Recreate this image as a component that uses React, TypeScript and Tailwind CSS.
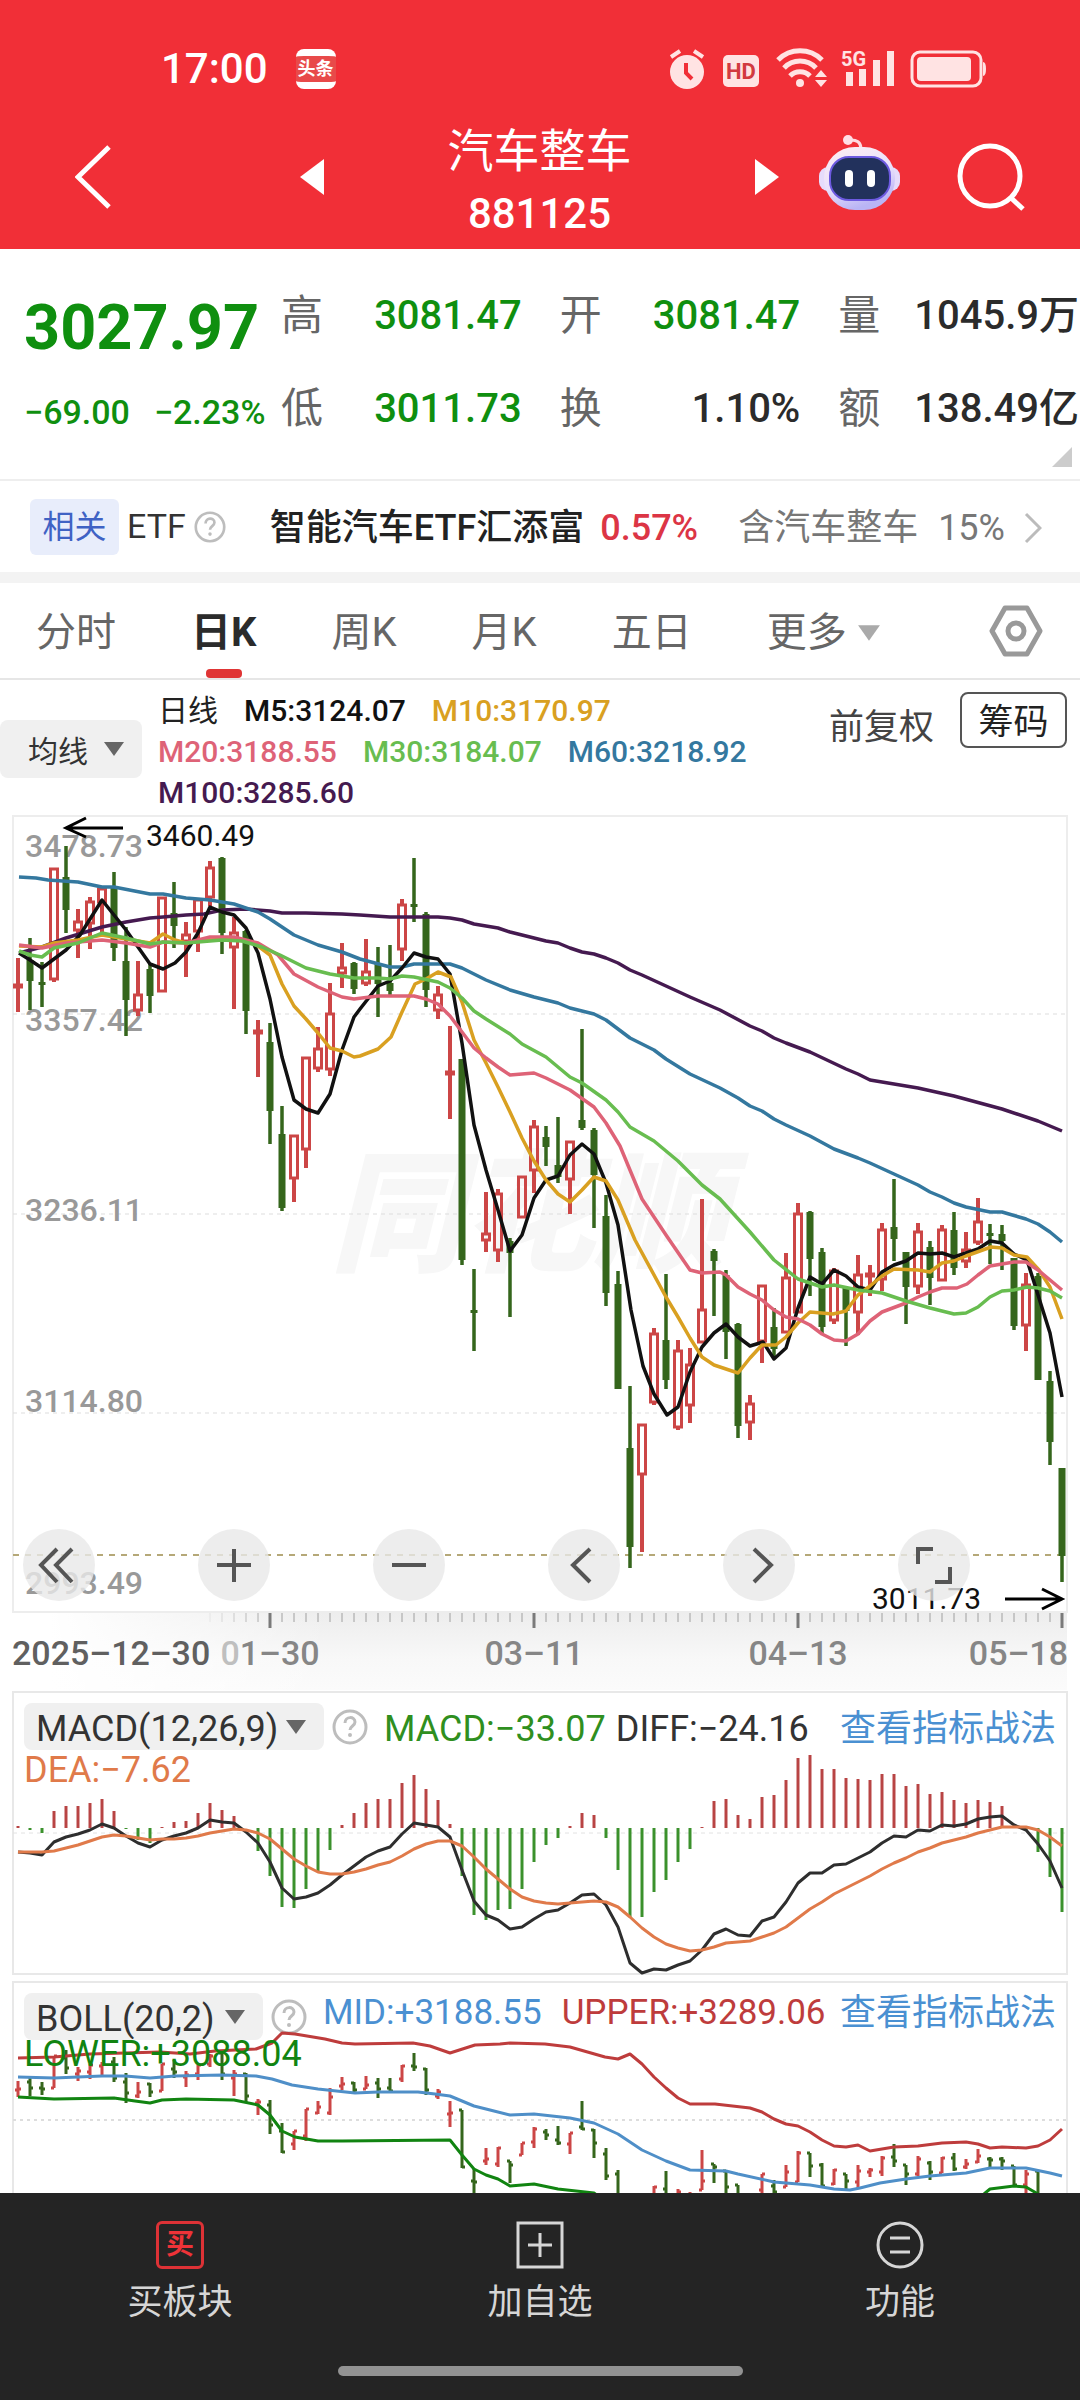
import React from 'react';

type Candle = [string, number, number, number, number];

// [direction, high, body top, body bottom, low]
const candles: Candle[] = [
    ['r', 158, 184, 188, 212], ['g', 138, 160, 181, 210], ['g', 162, 182, 185, 207], ['r', 68, 68, 180, 182],
    ['g', 46, 77, 110, 133], ['r', 109, 121, 131, 158], ['r', 97, 101, 124, 149], ['r', 88, 88, 103, 135],
    ['g', 72, 88, 148, 161], ['g', 127, 161, 200, 236], ['r', 161, 194, 211, 216], ['g', 163, 169, 196, 213],
    ['r', 97, 97, 192, 192], ['g', 82, 113, 126, 148], ['r', 122, 134, 142, 177], ['r', 99, 99, 132, 152],
    ['r', 61, 67, 98, 106], ['g', 57, 58, 133, 154], ['r', 117, 132, 148, 209], ['g', 130, 131, 211, 234],
    ['r', 220, 230, 234, 277], ['g', 223, 242, 311, 344], ['g', 306, 334, 408, 411], ['r', 335, 335, 379, 402],
    ['r', 257, 257, 350, 368], ['r', 227, 248, 269, 272], ['r', 183, 213, 270, 276], ['r', 143, 167, 174, 188],
    ['g', 162, 163, 189, 194], ['r', 139, 171, 184, 186], ['g', 147, 163, 184, 217], ['g', 145, 183, 191, 195],
    ['r', 99, 104, 150, 161], ['g', 58, 104, 107, 122], ['g', 112, 114, 190, 207], ['r', 186, 194, 211, 219],
    ['r', 226, 271, 275, 319], ['g', 259, 259, 460, 465], ['g', 469, 510, 513, 551], ['r', 392, 433, 441, 452],
    ['r', 389, 393, 451, 462], ['g', 438, 441, 453, 517], ['r', 376, 376, 418, 418], ['r', 320, 326, 371, 393],
    ['g', 326, 337, 347, 366], ['g', 317, 365, 377, 383], ['r', 341, 341, 380, 414], ['g', 229, 320, 328, 330],
    ['g', 328, 330, 375, 428], ['g', 395, 416, 493, 506], ['g', 471, 484, 589, 589], ['g', 586, 648, 747, 768],
    ['r', 624, 624, 675, 752], ['r', 528, 533, 603, 605], ['g', 474, 540, 580, 589], ['r', 540, 550, 628, 630],
    ['r', 548, 564, 606, 623], ['r', 399, 509, 543, 543], ['g', 449, 451, 461, 516], ['g', 470, 475, 532, 559],
    ['g', 523, 524, 626, 638], ['r', 595, 603, 623, 640], ['r', 485, 485, 542, 563], ['g', 508, 527, 549, 559],
    ['r', 453, 477, 533, 533], ['r', 403, 413, 513, 513], ['g', 411, 412, 459, 496], ['g', 448, 452, 527, 533],
    ['r', 468, 470, 521, 524], ['g', 487, 487, 511, 546], ['r', 455, 474, 513, 535], ['r', 465, 473, 477, 496],
    ['r', 423, 429, 480, 491], ['g', 379, 427, 439, 461], ['g', 452, 452, 487, 524], ['r', 423, 431, 487, 494],
    ['g', 441, 447, 478, 505], ['r', 425, 429, 481, 481], ['g', 412, 430, 468, 475], ['r', 432, 449, 462, 468],
    ['r', 398, 421, 443, 445], ['g', 424, 433, 436, 464], ['g', 425, 434, 441, 470], ['g', 458, 458, 526, 530],
    ['r', 473, 484, 526, 551], ['g', 473, 476, 580, 580], ['g', 571, 581, 642, 665], ['g', 668, 668, 756, 782],
];

const averages = [
    { name: 'M100', color: '#451a50', points: '19,153 42,147 66,138 102,127 126,122 150,118 163,117 186,115 204,114 222,110 246,109 270,111 282,113 306,113 342,114 360,115 390,117 438,117 450,118 462,120 474,124 498,128 510,132 546,141 558,143 570,148 582,152 594,154 606,158 618,163 630,170 642,175 690,197 720,210 750,226 762,231 774,238 786,243 810,252 846,269 858,274 870,280 894,284 918,288 954,296 1002,309 1038,321 1062,331' },
    { name: 'M60', color: '#34789f', points: '19,77 36,78 48,80 78,82 102,87 114,87 150,94 163,94 186,98 210,100 234,104 258,112 270,119 294,135 318,145 342,152 360,159 390,167 402,167 414,164 450,164 462,168 486,180 510,190 534,197 558,203 570,208 594,214 606,220 618,229 630,238 654,250 666,259 690,274 720,288 738,298 750,306 762,311 774,319 786,325 810,336 834,349 858,358 870,363 894,374 918,385 930,392 942,397 954,403 966,407 990,412 1002,412 1026,419 1038,424 1050,432 1062,442' },
    { name: 'M5', color: '#111111', points: '19,153 30,160 42,168 66,150 80,135 102,100 126,130 150,164 163,169 175,163 186,152 198,133 210,107 222,112 234,115 246,128 258,153 270,199 282,257 294,300 306,309 318,313 330,294 342,250 354,217 360,209 378,186 390,181 402,168 414,153 426,157 438,159 450,174 462,243 474,325 486,370 498,410 510,451 522,435 534,398 546,380 558,376 570,355 582,344 594,354 606,383 618,425 631,510 643,566 654,594 667,615 678,607 690,572 702,547 714,533 726,524 738,537 750,546 763,542 774,559 786,548 798,508 810,477 822,484 834,470 846,476 858,487 870,490 882,472 894,465 906,461 918,453 930,454 942,453 954,457 966,453 978,449 990,441 1002,443 1014,454 1027,460 1050,533 1062,597' },
    { name: 'M10', color: '#d9a021', points: '19,146 42,147 54,143 78,140 102,135 126,139 150,143 163,134 175,140 186,143 210,140 234,139 254,143 270,155 282,184 294,206 306,219 318,233 330,248 342,251 354,257 360,256 378,249 391,237 402,212 415,184 426,179 438,172 451,177 462,202 474,240 486,263 498,287 510,312 522,338 534,361 546,380 558,394 570,402 582,390 594,377 606,381 618,400 635,440 666,497 678,517 690,538 702,557 714,565 738,573 750,558 762,545 776,545 786,537 798,523 810,512 833,514 846,511 858,495 870,486 882,476 894,469 918,470 930,472 942,463 954,461 966,456 991,447 1002,448 1014,455 1027,457 1039,470 1050,487 1062,519' },
    { name: 'M20', color: '#de6377', points: '19,145 42,148 66,143 102,140 126,143 150,147 163,142 186,143 210,137 234,137 258,143 278,155 294,174 318,187 342,197 354,199 378,196 414,196 426,199 438,204 450,216 462,232 474,248 486,258 498,267 510,275 534,273 546,278 570,290 594,307 606,323 620,346 642,399 666,435 690,470 702,473 720,472 726,475 738,487 750,494 762,500 774,510 786,517 798,519 810,525 822,534 834,540 846,541 858,534 870,521 882,512 906,503 918,497 930,492 942,488 957,488 967,484 978,475 990,466 1014,462 1026,462 1038,470 1062,490' },
    { name: 'M30', color: '#68bd50', points: '19,151 30,155 42,157 54,148 78,143 102,133 126,138 150,144 163,142 186,143 222,140 242,141 262,147 280,155 306,168 330,174 354,178 378,178 390,179 402,176 414,177 438,182 450,188 462,198 474,211 486,219 510,234 522,244 546,257 570,277 582,283 606,300 618,312 630,327 654,341 678,361 702,385 720,399 750,432 774,460 798,479 810,483 822,487 834,485 858,490 882,493 906,501 930,508 954,514 966,513 978,507 990,497 1002,491 1014,490 1027,487 1038,488 1050,491 1062,498' },
];

const macdBars = [
    146, 150, 153, 131, 126, 126, 123, 119, 131, 149, 160, 163, 147, 142, 141, 133, 123, 130, 136, 148, 171, 196,
    227, 228, 209, 192, 170, 145, 133, 123, 119, 119, 103, 95, 109, 120, 144, 196, 235, 240, 230, 229, 209, 182,
    165, 158, 146, 133, 135, 158, 190, 237, 237, 212, 200, 182, 169, 147, 121, 119, 135, 139, 117, 115, 100, 78,
    75, 89, 89, 98, 99, 100, 94, 94, 106, 104, 114, 112, 120, 123, 120, 122, 126, 148, 151, 172, 197, 232,
];
const diff = [
    172, 173, 175, 162, 157, 154, 150, 144, 148, 156, 163, 167, 160, 156, 153, 148, 140, 142, 143, 152, 163, 182,
    208, 219, 217, 213, 205, 195, 186, 177, 171, 167, 154, 143, 145, 147, 157, 190, 221, 235, 240, 249, 247, 239,
    232, 230, 223, 215, 214, 225, 247, 283, 293, 289, 290, 285, 281, 270, 254, 249, 255, 256, 241, 237, 222, 203,
    193, 193, 185, 184, 178, 172, 163, 156, 157, 150, 151, 145, 146, 144, 139, 137, 136, 145, 150, 164, 181, 208,
];
const dea = [
    172, 172, 172, 171, 168, 165, 161, 157, 155, 156, 158, 160, 159, 159, 158, 156, 153, 151, 149, 150, 153, 159,
    169, 179, 186, 192, 194, 194, 192, 189, 185, 182, 176, 169, 164, 161, 161, 166, 177, 189, 199, 209, 217, 221,
    223, 224, 223, 222, 221, 222, 227, 237, 248, 257, 264, 268, 271, 270, 267, 263, 262, 261, 257, 253, 247, 238,
    229, 222, 214, 208, 202, 196, 189, 183, 178, 172, 168, 163, 160, 157, 153, 150, 147, 147, 147, 150, 157, 166,
];

const boll = [
    { color: '#be3c3c', points: '18,78 54,77 90,74 125,73 160,72 190,74 215,71 256,69 272,63 282,53 295,54 325,59 342,63 355,64 413,63 430,66 450,73 475,65 500,64 510,63 545,64 570,67 605,77 618,79 630,74 642,84 654,97 666,108 678,118 690,124 715,124 750,128 762,132 774,139 786,144 798,146 810,152 822,160 834,166 846,167 858,165 870,171 894,167 918,166 942,163 966,162 978,164 990,168 1002,167 1026,168 1038,166 1050,160 1062,149' },
    { color: '#4f8fc8', points: '18,97 54,98 102,96 125,96 150,98 175,96 222,95 256,96 272,99 292,105 318,109 355,113 378,112 418,112 435,114 450,116 474,126 490,130 510,135 534,134 570,138 594,143 618,154 642,170 666,181 690,190 726,191 738,194 774,202 810,205 834,209 850,210 860,208 880,203 906,199 930,196 966,193 990,188 1026,188 1050,193 1062,196' },
    { color: '#118411', points: '18,117 54,119 114,118 135,121 150,123 162,120 186,119 234,120 258,125 270,135 282,151 295,157 318,161 342,161 450,160 462,175 474,189 486,195 498,199 510,206 534,204 558,209 594,213 606,222 700,260 900,260 972,222 984,214 990,209 1014,206 1026,207 1038,214 1062,240' },
];

const barX = (i: number) => 18 + i * 12;
const toPoints = (values: number[]) => values.map((v, i) => `${barX(i)},${v}`).join(' ');
const toBollY = (y: number) => Math.round(y * 0.283 + 56.6);

const StatusIcons: React.FC = () => (
    <svg viewBox="0 0 320 42" className="w-[320px] h-[42px]" fill="#ffe3e3">
        {/* alarm */}
        <circle cx="18" cy="24" r="17" />
        <path d="M2 9 11 3M34 9 25 3" stroke="#ffe3e3" strokeWidth="4" />
        <path d="M17 15v10l6 6" stroke="#f12f37" strokeWidth="4" fill="none" />
        {/* HD */}
        <rect x="54" y="7" width="36" height="32" rx="5" />
        <text x="72" y="31" textAnchor="middle" fontSize="22" fontWeight="700" fill="#d23a40">HD</text>
        {/* wifi */}
        <g fill="none" stroke="#ffe3e3" strokeWidth="5">
            <path d="M109 12a31 31 0 0 1 44 0M115 20a22 22 0 0 1 32 0M121 28a14 14 0 0 1 20 0" />
        </g>
        <circle cx="131" cy="35" r="4" />
        <path d="m152 22 6 7h-12zM152 39l6-7h-12z" />
        {/* signal */}
        <text x="172" y="18" fontSize="20" fontWeight="700">5G</text>
        <path d="M177 24h7v14h-7zM190 21h7v17h-7zM204 12h7v26h-7zM218 3h7v35h-7z" />
        {/* battery */}
        <rect x="243" y="4" width="69" height="34" rx="8" fill="none" stroke="#ffe3e3" strokeWidth="3" />
        <rect x="248" y="9" width="54" height="24" rx="4" />
        <path d="M314 14q3 0 3 7t-3 7z" />
    </svg>
);

const RobotIcon: React.FC = () => (
    <svg viewBox="0 0 81 76" className="w-[81px] h-[76px]">
        <defs>
            <linearGradient id="shell" x1="0" y1="0" x2="0.4" y2="1">
                <stop offset="0" stopColor="#ffeef2" />
                <stop offset="0.6" stopColor="#e9e0fb" />
                <stop offset="1" stopColor="#b9b4f5" />
            </linearGradient>
        </defs>
        <path d="M30 5q12-1 12 9" fill="none" stroke="#ffd9e0" strokeWidth="3" />
        <circle cx="29" cy="5" r="5" fill="#ffdfe6" />
        <rect x="0" y="32" width="81" height="24" rx="9" fill="#e6dcfb" />
        <rect x="5" y="12" width="71" height="63" rx="31" fill="url(#shell)" />
        <rect x="11" y="22" width="60" height="43" rx="19" fill="#22315c" stroke="#6d5ae0" strokeWidth="2" />
        <rect x="26" y="35" width="8" height="17" rx="4" fill="#fff" />
        <rect x="48" y="35" width="8" height="17" rx="4" fill="#fff" />
    </svg>
);

const HelpIcon: React.FC<{ className: string }> = ({ className }) => (
    <svg viewBox="0 0 36 36" className={className} fill="none">
        <circle cx="18" cy="18" r="16" stroke="#bdbdbd" strokeWidth="3" />
        <path d="M13 14c0-7 10-7 10-1 0 4-5 4-5 8" stroke="#bdbdbd" strokeWidth="3" />
        <circle cx="18" cy="26" r="2" fill="#bdbdbd" />
    </svg>
);

const Caret: React.FC<{ className: string }> = ({ className }) => (
    <svg viewBox="0 0 22 16" className={className}>
        <path d="M1 1h20L11 15z" fill="currentColor" />
    </svg>
);

interface PickerProps {
    label: string;
    value: string;
    className: string;
}

const Picker: React.FC<PickerProps> = ({ label, value, className }) => (
    <div className="relative shrink-0">
        <select aria-label={label} defaultValue={value} className={`appearance-none bg-[#f0f0f0] text-[#333] rounded-lg pt-1 ${className}`}>
            <option>{value}</option>
        </select>
        <Caret className="absolute right-4 top-1/2 -translate-y-1/2 w-6 h-4 text-[#666] pointer-events-none" />
    </div>
);

const Header: React.FC = () => (
    <header className="bg-[#f12f37] text-white shrink-0 pb-1">
        <div className="h-[117px] pt-5 pl-[161px] pr-[91px] flex items-center justify-between">
            <div className="flex items-center gap-7">
                <span className="text-[42px] leading-none font-medium">17:00</span>
                <span className="w-10 h-10 rounded-lg border-y-[7px] border-white bg-[#e84a4a] text-[18px] leading-[26px] text-center font-bold">头条</span>
            </div>
            <StatusIcons />
        </div>
        <div className="flex h-32">
            <div className="w-[324px] pl-[75px] pb-2 flex items-center justify-between">
                <button aria-label="返回">
                    <svg viewBox="0 0 36 64" className="w-9 h-16" fill="none" stroke="#fff" strokeWidth="5">
                        <path d="M34 2 3 32l31 30" />
                    </svg>
                </button>
                <button aria-label="上一个">
                    <svg viewBox="0 0 24 36" className="w-6 h-9" fill="#fff"><path d="M24 0v36L0 18z" /></svg>
                </button>
            </div>
            <div className="flex-1 pt-[2px] text-center">
                <h1 className="text-[46px] leading-[64px]">汽车整车</h1>
                <div className="text-[42px] leading-[62px] font-medium">881125</div>
            </div>
            <div className="w-[325px] pr-[55px] pb-2 flex items-center">
                <button aria-label="下一个">
                    <svg viewBox="0 0 24 36" className="w-6 h-9" fill="#fff"><path d="M0 0v36l24-18z" /></svg>
                </button>
                <button aria-label="助手" className="ml-10 pb-2"><RobotIcon /></button>
                <button aria-label="搜索" className="ml-auto">
                    <svg viewBox="0 0 68 68" className="w-[68px] h-[68px]" fill="none" stroke="#fff" strokeWidth="5">
                        <circle cx="33" cy="33" r="30" />
                        <path d="m53 54 13 12" />
                    </svg>
                </button>
            </div>
        </div>
    </header>
);

const quoteItems = [
    { label: '高', value: '3081.47', color: 'text-[#0f8f0f]' },
    { label: '开', value: '3081.47', color: 'text-[#0f8f0f]' },
    { label: '量', value: '1045.9万', color: 'text-[#2b2b2b]' },
    { label: '低', value: '3011.73', color: 'text-[#0f8f0f]' },
    { label: '换', value: '1.10%', color: 'text-[#2b2b2b]' },
    { label: '额', value: '138.49亿', color: 'text-[#2b2b2b]' },
];

const Quote: React.FC = () => (
    <section className="relative flex h-[232px] border-b-2 border-[#eeeeee]">
        <div className="w-[281px] pl-6 pt-9 text-[#0f8f0f] shrink-0">
            <div className="text-[63px] leading-[85px] font-bold">3027.97</div>
            <div className="text-[34px] leading-[85px] font-medium flex gap-6 whitespace-nowrap">
                <span>−69.00</span>
                <span>−2.23%</span>
            </div>
        </div>
        <dl className="flex-1 pt-5 pr-px grid grid-cols-3 gap-x-[38px] content-start">
            {quoteItems.map(item => (
                <div key={item.label} className="h-[93px] flex items-center justify-between whitespace-nowrap">
                    <dt className="text-[42px] text-[#666]">{item.label}</dt>
                    <dd className={`text-[40px] font-medium ${item.color}`}>{item.value}</dd>
                </div>
            ))}
        </dl>
        <svg viewBox="0 0 20 20" className="absolute right-2 bottom-3 w-5 h-5"><path d="M20 0v20H0z" fill="#cccccc" /></svg>
    </section>
);

const RelatedEtf: React.FC = () => (
    <section className="h-[91px] pl-[30px] pr-[38px] flex items-center text-[36px] whitespace-nowrap">
        <span className="w-[89px] h-14 rounded-md bg-[#e8edfb] text-[#3f62c4] text-[32px] leading-[56px] text-center">相关</span>
        <span className="ml-2 text-[34px] text-[#333]">ETF</span>
        <HelpIcon className="ml-2 w-8 h-8" />
        <a href="#etf" className="ml-11 pt-[2px] flex items-center flex-1">
            <span className="text-[#222] font-medium">智能汽车ETF汇添富</span>
            <span className="ml-4 text-[#dc3545] font-medium">0.57%</span>
            <span className="ml-10 text-[#777]">含汽车整车</span>
            <span className="ml-5 text-[#777]">15%</span>
            <svg viewBox="0 0 18 32" className="ml-auto w-[18px] h-8" fill="none" stroke="#bbbbbb" strokeWidth="3">
                <path d="m2 2 14 14L2 30" />
            </svg>
        </a>
    </section>
);

const periods = ['分时', '日K', '周K', '月K', '五日'];

const PeriodTabs: React.FC = () => {
    const [active, setActive] = React.useState('日K');
    return (
        <nav className="h-[97px] pl-9 pr-[37px] border-b-2 border-[#e6e6e6] flex gap-[75px] text-[40px] text-[#666]">
            {periods.map(p => (
                <button key={p} onClick={() => setActive(p)} className={`relative pt-1 ${p === active ? 'font-bold text-[#2b2b2b]' : ''}`}>
                    {p}
                    {p === active && <span className="absolute bottom-0 left-1/2 -translate-x-1/2 w-9 h-[9px] rounded bg-[#e03535]" />}
                </button>
            ))}
            <button className="flex items-center gap-[10px] pt-1">
                更多
                <Caret className="w-6 h-5 text-[#aaa]" />
            </button>
            <button aria-label="设置" className="ml-auto">
                <svg viewBox="0 0 54 52" className="w-[54px] h-[52px]" fill="none" stroke="#999" strokeWidth="5">
                    <path d="M16 3h22l13 23-13 23H16L3 26z" strokeLinejoin="round" />
                    <circle cx="27" cy="26" r="8" />
                </svg>
            </button>
        </nav>
    );
};

const AverageLegend: React.FC = () => (
    <div className="h-[135px] pr-[13px] flex items-start text-[30px]">
        <div className="pt-10">
            <Picker label="主图指标" value="均线" className="w-[142px] h-[58px] pl-[28px]" />
        </div>
        <div className="w-[620px] pl-4 pt-[10px] flex flex-wrap gap-x-[26px] leading-[41px] font-medium">
            <span className="text-[#222] font-normal">日线</span>
            <span className="text-[#111]">M5:3124.07</span>
            <span className="text-[#d9a021] mr-20">M10:3170.97</span>
            <span className="text-[#de6377]">M20:3188.55</span>
            <span className="text-[#68bd50]">M30:3184.07</span>
            <span className="text-[#34789f]">M60:3218.92</span>
            <span className="text-[#451a50]">M100:3285.60</span>
        </div>
        <button className="ml-auto mt-3 h-14 text-[35px] text-[#444] pt-[10px]">前复权</button>
        <button className="ml-[26px] mt-3 w-[107px] h-14 rounded-lg border-2 border-[#555] text-[35px] leading-none text-[#222] pt-1">筹码</button>
    </div>
);

const scale = [
    { value: '3478.73', y: 57 },
    { value: '3357.42', y: 231 },
    { value: '3236.11', y: 421 },
    { value: '3114.80', y: 612 },
    { value: '2993.49', y: 794 },
];

const ticks = Array.from({ length: 72 }, (_, i) => i + 16);

const CandleChart: React.FC = () => (
    <svg viewBox="0 15 1080 875" className="block w-full h-auto" fill="none">
        <defs>
            <linearGradient id="axisDown" x1="0" y1="0" x2="0" y2="1">
                <stop offset="0" stopColor="#ededed" />
                <stop offset="0.6" stopColor="#f8f8f8" />
                <stop offset="1" stopColor="#fbfbfb" />
            </linearGradient>
            <linearGradient id="axisFade" x1="0" y1="0" x2="1" y2="0">
                <stop offset="0.15" stopColor="#fff" />
                <stop offset="1" stopColor="#fff" stopOpacity="0" />
            </linearGradient>
        </defs>
        <rect x="0" y="813" width="1067" height="77" fill="url(#axisDown)" />
        <rect x="0" y="813" width="330" height="77" fill="url(#axisFade)" />
        <rect x="13" y="16" width="1054" height="796" stroke="#ededed" strokeWidth="2" />
        <text x="330" y="461" fontSize="132" fontWeight="900" fontStyle="italic" fill="#f7f7f7">同花顺</text>
        <path d="M13 214h1054M13 414h1054M13 613h1054" stroke="#dddddd" strokeWidth="1" strokeDasharray="4 4" />
        <path d="M13 755h1054" stroke="#b5a878" strokeWidth="2" strokeDasharray="6 6" />

        <g fontSize="32" fontWeight="500" fill="#999">
            {scale.map(s => <text key={s.value} x="25" y={s.y}>{s.value}</text>)}
        </g>

        {candles.map(([dir, high, top, bottom, low], i) => {
            const x = barX(i);
            return dir === 'r' ? (
                <g key={i} stroke="#cc4646">
                    <path d={`M${x} ${high}V${top}M${x} ${bottom}V${low}`} strokeWidth="4" />
                    <rect x={x - 3.5} y={top + 1} width="7" height={Math.max(bottom - top - 2, 1)} strokeWidth="3" />
                </g>
            ) : (
                <g key={i} fill="#35661c">
                    <rect x={x - 1.75} y={high} width="3.5" height={low - high} />
                    <rect x={x - 3.5} y={top} width="7" height={bottom - top} />
                </g>
            );
        })}
        {averages.map(a => (
            <polyline key={a.name} points={a.points} stroke={a.color} strokeWidth="3.5" strokeLinejoin="round" />
        ))}

        <path d="M123 28H66M86 18 66 28l20 9" stroke="#000" strokeWidth="3" />
        <path d="M1005 799h57M1042 789l20 10-20 10" stroke="#000" strokeWidth="3" />
        <g fontSize="30" fill="#111">
            <text x="146" y="46">3460.49</text>
            <text x="872" y="809">3011.73</text>
        </g>

        {ticks.map(i => {
            const major = (i - 21) % 22 === 0;
            return (
                <path
                    key={i}
                    d={`M${barX(i)} 813v${major ? 15 : 9}`}
                    stroke={major ? '#7a7a7a' : '#a0a0a0'}
                    strokeWidth={major ? 3 : 1}
                    opacity={i < 21 ? (i - 15) / 6 : 1}
                />
            );
        })}
        <g fontSize="34" fontWeight="500" fill="#868686">
            <text x="12" y="865" fill="#606060">2025–12–30</text>
            <text x="270" y="865" textAnchor="middle"><tspan fill="#bfbfbf">0</tspan>1–30</text>
            <text x="534" y="865" textAnchor="middle">03–11</text>
            <text x="798" y="865" textAnchor="middle">04–13</text>
            <text x="1068" y="865" textAnchor="end">05–18</text>
        </g>
    </svg>
);

const tools = [
    { label: '收起', path: 'M34 20 18 36l16 17M49 20 33 36l16 17' },
    { label: '放大', path: 'M36 20v33M19 36h34' },
    { label: '缩小', path: 'M19 36h34' },
    { label: '左移', path: 'M42 20 25 36l17 17' },
    { label: '右移', path: 'M31 20l17 16-17 17' },
    { label: '全屏', path: 'M35 20H20v15M37 53h15V38' },
];

const ChartTools: React.FC = () => (
    <div className="absolute left-[23px] bottom-[89px] flex gap-[103px]">
        {tools.map(t => (
            <button key={t.label} aria-label={t.label} className="w-[72px] h-[72px] rounded-full bg-[#e9e9e9]/80">
                <svg viewBox="0 0 72 72" fill="none" stroke="#555" strokeWidth="4"><path d={t.path} /></svg>
            </button>
        ))}
    </div>
);

const MacdPanel: React.FC = () => (
    <section className="grid text-[36px]">
        <svg viewBox="0 10 1080 285" className="[grid-area:1/1] w-full h-auto" fill="none">
            <rect x="13" y="12" width="1054" height="282" stroke="#e8e8e8" strokeWidth="2" />
            <path d="M13 153h1054" stroke="#e2e2e2" strokeDasharray="4 4" />
            {macdBars.map((y, i) => (
                <path key={i} d={`M${barX(i)} 148V${y}`} stroke={y < 148 ? '#b84444' : '#3b912c'} strokeWidth="3" />
            ))}
            <polyline points={toPoints(diff)} stroke="#2e2e2e" strokeWidth="3" strokeLinejoin="round" />
            <polyline points={toPoints(dea)} stroke="#e07a4a" strokeWidth="3" strokeLinejoin="round" />
        </svg>
        <div className="[grid-area:1/1] pl-6 pr-6 pt-[13px] whitespace-nowrap">
            <div className="flex items-center h-[47px] leading-[42px]">
                <Picker label="副图指标一" value="MACD(12,26,9)" className="w-[300px] h-[47px] pl-3" />
                <HelpIcon className="ml-2 w-9 h-9" />
                <span className="ml-4 pt-1 text-[#2f8f20]">MACD:−33.07</span>
                <span className="ml-[10px] pt-1 text-[#333]">DIFF:−24.16</span>
                <a href="#macd" className="ml-auto pt-1 text-[#4a90d2]">查看指标战法</a>
            </div>
            <div className="leading-10 text-[#e07a4a]">DEA:−7.62</div>
        </div>
    </section>
);

const BollPanel: React.FC = () => (
    <section className="grid text-[36px]">
        <svg viewBox="0 -5 1080 300" className="[grid-area:1/1] w-full h-auto" fill="none">
            <rect x="13" y="2" width="1054" height="290" stroke="#e8e8e8" strokeWidth="2" />
            <path d="M13 140h1054" stroke="#dddddd" strokeWidth="2" strokeDasharray="3 4" />
        </svg>
        <div className="[grid-area:1/1] pl-6 pr-6 pt-[18px] whitespace-nowrap">
            <div className="flex items-start h-[47px] leading-10">
                <Picker label="副图指标二" value="BOLL(20,2)" className="w-[239px] h-[47px] pl-3" />
                <HelpIcon className="ml-2 mt-[6px] w-9 h-9" />
                <span className="ml-4 text-[35px] text-[#4a90d2]">MID:+3188.55</span>
                <span className="ml-5 text-[35px] text-[#be3c3c]">UPPER:+3289.06</span>
                <a href="#boll" className="ml-auto text-[#4a90d2]">查看指标战法</a>
            </div>
            <div className="relative leading-7 text-[#118411]">LOWER:+3088.04</div>
        </div>
        <svg viewBox="0 -5 1080 300" className="[grid-area:1/1] w-full h-auto pointer-events-none" fill="none">
            {candles.map(([dir, high, top, bottom, low], i) => {
                const x = barX(i);
                const open = toBollY(dir === 'r' ? bottom : top);
                const close = toBollY(dir === 'r' ? top : bottom);
                return (
                    <path
                        key={i}
                        d={`M${x} ${toBollY(high)}V${toBollY(low)}M${x - 3} ${open}h3M${x} ${close}h3`}
                        stroke={dir === 'r' ? '#cc4646' : '#35661c'}
                        strokeWidth="3"
                    />
                );
            })}
            {boll.map(b => (
                <polyline key={b.color} points={b.points} stroke={b.color} strokeWidth="3" strokeLinejoin="round" />
            ))}
        </svg>
    </section>
);

const BottomBar: React.FC = () => (
    <footer className="bg-[#242424] text-[#d6d6d6] text-[35px] shrink-0 pb-6">
        <div className="pt-7 grid grid-cols-3">
            <button className="flex flex-col items-center gap-[14px] leading-10">
                <span className="w-12 h-12 rounded-md border-[3px] border-[#dd3236] text-[#ee3338] text-[28px] leading-[42px] font-bold">买</span>
                买板块
            </button>
            <button className="flex flex-col items-center gap-[14px] leading-10">
                <svg viewBox="0 0 48 48" className="w-12 h-12" fill="none" stroke="#d6d6d6" strokeWidth="3">
                    <path d="M2 2h44v44H2zM24 12v24M12 24h24" />
                </svg>
                加自选
            </button>
            <button className="flex flex-col items-center gap-[14px] leading-10">
                <svg viewBox="0 0 48 48" className="w-12 h-12" fill="none" stroke="#d6d6d6" strokeWidth="3">
                    <circle cx="24" cy="24" r="22" />
                    <path d="M14 17h20M14 31h20" />
                </svg>
                功能
            </button>
        </div>
        <div className="mt-[43px] mx-auto w-[405px] h-[10px] rounded-full bg-[#929292]" />
    </footer>
);

const App: React.FC = () => {
    return (
        <div className="h-screen flex flex-col bg-white font-['Roboto','Noto_Sans_CJK_SC',sans-serif]">
            <Header />
            <main className="flex-1 min-h-0 overflow-y-auto [scrollbar-width:none]">
                <Quote />
                <RelatedEtf />
                <div className="h-[11px] bg-[#f3f3f3]" />
                <PeriodTabs />
                <AverageLegend />
                <div className="relative">
                    <CandleChart />
                    <ChartTools />
                </div>
                <MacdPanel />
                <BollPanel />
            </main>
            <BottomBar />
        </div>
    );
};

export default App;
